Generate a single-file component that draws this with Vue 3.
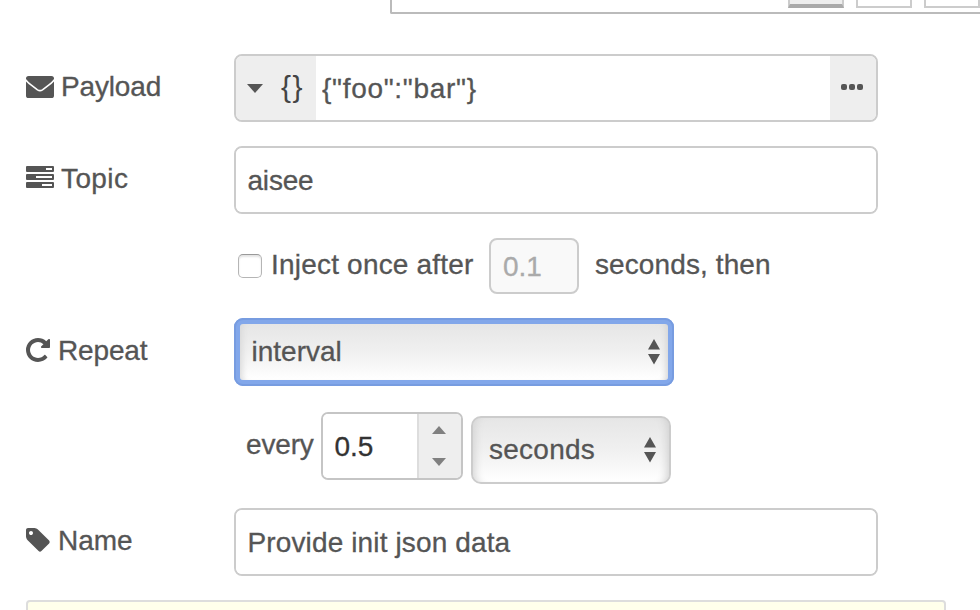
<script setup>
import { ref } from 'vue'

const payload = ref('{"foo":"bar"}')
const topic = ref('aisee')
const delay = ref('0.1')
const interval = ref('0.5')
const name = ref('Provide init json data')
</script>

<template>
  <div class="dialog">
    <header class="tray">
      <span class="tab active"></span>
      <span class="tab"></span>
      <span class="tab"></span>
    </header>

    <div class="row">
      <div class="label">
        <svg class="wide" viewBox="0 0 28 24">
          <rect y="1" width="28" height="22" rx="2.6" />
          <path class="cut" d="M-1 4Q1.5 7.3 5 9.9L11.5 14.8Q14 16.5 16.5 14.8L23 9.9Q26.5 7.3 29 4" />
        </svg>
        <span class="t-payload">Payload</span>
      </div>
      <div class="field typed">
        <div class="type"><i class="caret"></i><span class="braces">{}</span></div>
        <input v-model="payload" class="v-payload" />
        <div class="more"><i></i><i></i><i></i></div>
      </div>
    </div>

    <div class="row">
      <div class="label">
        <svg class="wide tasks" viewBox="0 0 28 24">
          <path fill-rule="evenodd" d="M1 1H27Q28 1 28 2V6Q28 7 27 7H1Q0 7 0 6V2Q0 1 1 1ZM20 3V5H26V3Z" />
          <path fill-rule="evenodd" d="M1 9H27Q28 9 28 10V14Q28 15 27 15H1Q0 15 0 14V10Q0 9 1 9ZM10 11V13H26V11Z" />
          <path fill-rule="evenodd" d="M1 17H27Q28 17 28 18V22Q28 23 27 23H1Q0 23 0 22V18Q0 17 1 17ZM16 19V21H26V19Z" />
        </svg>
        <span class="t-topic">Topic</span>
      </div>
      <div class="field"><input v-model="topic" class="v-topic" /></div>
    </div>

    <div class="row once">
      <span class="check"></span>
      <span class="t-inject">Inject once after</span>
      <div class="delay">{{ delay }}</div>
      <span class="t-then">seconds, then</span>
    </div>

    <div class="row">
      <div class="label">
        <svg viewBox="128 128 1536 1536">
          <path d="M1664 256v448q0 26-19 45t-45 19h-448q-42 0-59-40-17-39 14-69l138-138q-148-137-349-137-104 0-198.5 40.5t-163.5 109.5-109.5 163.5-40.5 198.5 40.5 198.5 109.5 163.5 163.5 109.5 198.5 40.5q119 0 225-52t179-147q7-10 23-12 15 0 25 9l137 138q9 8 9.5 20.5t-7.5 22.5q-109 132-264 204.5t-327 72.5q-156 0-298-61t-245-164-164-245-61-298 61-298 164-245 245-164 298-61q147 0 284.5 55.5t244.5 156.5l130-129q29-31 70-14 39 17 39 59z" />
        </svg>
        <span class="t-repeat">Repeat</span>
      </div>
      <div class="select focused">
        <span class="t-interval">interval</span>
        <svg class="sort" viewBox="0 0 12 26"><path d="M6 0L12 10.5H0ZM0 15H12L6 25.5Z" /></svg>
      </div>
    </div>

    <div class="row every">
      <span class="t-every">every</span>
      <div class="spinner">
        <input v-model="interval" class="v-num" />
        <div class="steps"><i class="up"></i><i class="down"></i></div>
      </div>
      <div class="select unit">
        <span class="t-seconds">seconds</span>
        <svg class="sort" viewBox="0 0 12 26"><path d="M6 0L12 10.5H0ZM0 15H12L6 25.5Z" /></svg>
      </div>
    </div>

    <div class="row">
      <div class="label">
        <svg viewBox="128 128 1536 1536">
          <path d="M576 448q0-53-37.5-90.5t-90.5-37.5-90.5 37.5-37.5 90.5 37.5 90.5 90.5 37.5 90.5-37.5 37.5-90.5zm1067 576q0 53-37 90l-491 492q-39 37-91 37-53 0-90-37l-715-716q-38-37-64.5-101t-26.5-117v-416q0-52 38-90t90-38h416q53 0 117 26.5t102 64.5l715 714q37 39 37 91z" />
        </svg>
        <span class="t-name">Name</span>
      </div>
      <div class="field"><input v-model="name" class="v-name" /></div>
    </div>

    <div class="tip"></div>
  </div>
</template>

<style>
body {
  margin: 0;
  background: #fff;
}
</style>

<style scoped>
* {
  box-sizing: border-box;
}
.dialog {
  width: 980px;
  height: 610px;
  overflow: hidden;
  display: flex;
  flex-direction: column;
  background: #fff;
  color: #555;
  font-family: "Liberation Sans", Arial, sans-serif;
  font-size: 28px;
  white-space: nowrap;
  -webkit-text-stroke: 0.3px;
}
.tray {
  flex: none;
  height: 14px;
  margin: 0 0 40px 390px;
  border-left: 2px solid #bbb;
  border-bottom: 2px solid #bbb;
  border-bottom-left-radius: 2px;
  padding-left: 396px;
  display: flex;
  gap: 12px;
}
.tab {
  flex: none;
  width: 56px;
  height: 8px;
  border: 2px solid #ccc;
  border-top: 0;
}
.tab.active {
  background: #eee;
  border-bottom: 4px solid #aaa;
}
.row {
  flex: none;
  display: flex;
  height: 68px;
  margin-bottom: 24px;
}
.label {
  width: 234px;
  padding: 0 0 4px 26px;
  display: flex;
  align-items: center;
  gap: 8px;
}
.label span {
  padding-top: 2px;
}
.label svg {
  flex: none;
  width: 24px;
  height: 24px;
  fill: #555;
}
.label svg.wide {
  width: 28px;
  margin: 2px -1px 0 0;
}
.label svg.tasks {
  margin-top: -2px;
}
.cut {
  fill: none;
  stroke: #fff;
  stroke-width: 1.6;
}
.t-payload,
.t-repeat,
.t-every {
  letter-spacing: -0.15px;
}
.t-topic {
  letter-spacing: 0.4px;
}
.field {
  width: 644px;
  border: 2px solid #ccc;
  border-radius: 8px;
  display: flex;
  overflow: hidden;
}
input {
  flex: 1;
  min-width: 0;
  border: 0;
  outline: 0;
  margin: 0;
  padding: 2px 0 0 11.5px;
  background: #fff;
  color: #555;
  font: inherit;
}
input.v-payload {
  padding-left: 6px;
  letter-spacing: 0.7px;
}
.v-topic {
  letter-spacing: -0.2px;
}
.v-name {
  letter-spacing: 0.13px;
}
.type {
  width: 80px;
  background: #eee;
  display: flex;
  align-items: center;
}
.caret {
  margin: 1px 0 0 11px;
  border: 8px solid transparent;
  border-top: 9px solid #555;
  border-bottom: 0;
}
.braces {
  margin: -2px 0 0 18px;
  font-size: 30px;
  letter-spacing: 1.6px;
  color: #444;
  -webkit-text-stroke: 0;
}
.more {
  width: 46px;
  background: #eee;
  display: flex;
  justify-content: center;
  align-items: center;
  gap: 2px;
  padding-right: 2px;
}
.more i {
  width: 6px;
  height: 6px;
  margin-top: -2px;
  border-radius: 2px;
  background: #555;
}
.once {
  height: 56px;
  padding-left: 238px;
  align-items: center;
}
.check {
  width: 24px;
  height: 24px;
  border: 1px solid #b5b5b5;
  border-top-color: #999;
  border-radius: 5px;
  box-shadow: inset 0 2px 2px #e4e4e4;
}
.t-inject {
  width: 217px;
  padding: 0 0 3px 9px;
  letter-spacing: 0.2px;
}
.delay {
  width: 90px;
  height: 56px;
  margin-left: 10px;
  padding-left: 12px;
  border: 2px solid #ccc;
  border-radius: 8px;
  background: #f9f9f9;
  color: #aaa;
  line-height: 53px;
}
.t-then {
  padding: 0 0 3px 16px;
  letter-spacing: 0.1px;
}
.select {
  width: 440px;
  height: 68px;
  border: 2px solid #ccc;
  border-radius: 10px;
  padding: 0 13px 0 16px;
  display: flex;
  align-items: center;
  justify-content: space-between;
  background: linear-gradient(#e6e6e6, #f0f0f0 50%, #fff);
  box-shadow: inset 9px 0 8px -7px #d4d4d4, inset -9px 0 8px -7px #d0d0d0;
}
.focused {
  border: 6px solid #82a7ea;
  border-radius: 9px;
  outline: 2px solid #779ce0;
  outline-offset: -2px;
  padding: 0 8px 0 11.5px;
  box-shadow: inset 7px 0 6px -5px #d8d8d8, inset -7px 0 6px -5px #d4d4d4;
}
.t-seconds {
  letter-spacing: 0.25px;
}
.sort {
  flex: none;
  width: 12px;
  height: 26px;
  fill: #555;
}
.every {
  height: 72px;
  margin: 2px 0 24px;
  padding-left: 246px;
}
.t-every {
  width: 75px;
  line-height: 66px;
}
.spinner {
  width: 142px;
  height: 68px;
  border: 2px solid #c5c5c5;
  border-radius: 7px;
  display: flex;
  overflow: hidden;
}
.v-num {
  color: #333;
}
.steps {
  width: 44px;
  border-left: 2px solid #ddd;
  background: #eee;
  display: flex;
  flex-direction: column;
  align-items: center;
  justify-content: center;
  gap: 24px;
  padding-right: 2px;
}
.steps i {
  border: 7px solid transparent;
}
.steps .up {
  border-top: 0;
  border-bottom: 8px solid #808080;
}
.steps .down {
  border-bottom: 0;
  border-top: 8px solid #808080;
}
.unit {
  width: 200px;
  margin: 4px 0 0 8px;
}
.tip {
  flex: none;
  width: 920px;
  height: 30px;
  margin-left: 26px;
  border: 2px solid #ddd;
  border-radius: 4px;
  background: #ffffeb;
}
</style>
